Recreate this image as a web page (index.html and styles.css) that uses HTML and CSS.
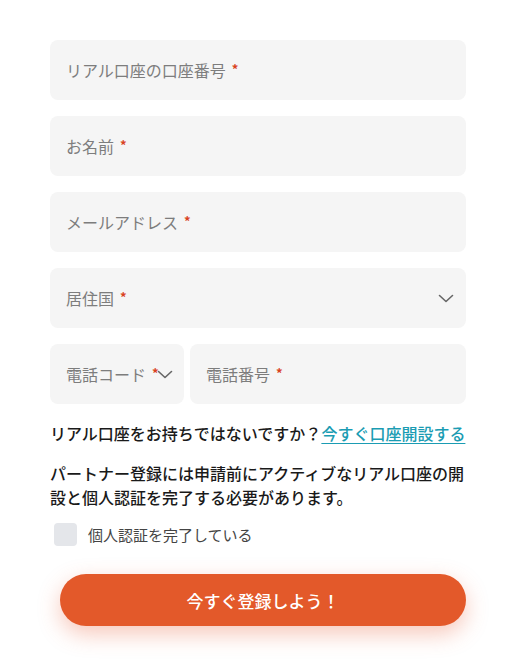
FILE: index.html
```html
<!DOCTYPE html>
<html lang="ja">
<head>
<meta charset="utf-8">
<link rel="stylesheet" href="styles.css">
</head>
<body>
<form class="form">
  <div class="field"><span class="ph">リアル口座の口座番号<span class="req">*</span></span></div>
  <div class="field"><span class="ph">お名前<span class="req">*</span></span></div>
  <div class="field"><span class="ph">メールアドレス<span class="req">*</span></span></div>
  <div class="field select"><span class="ph">居住国<span class="req">*</span></span>
    <svg class="chev" width="16" height="9" viewBox="0 0 16 9"><path d="M1.5 1.5 L8 7.5 L14.5 1.5" fill="none" stroke="#666" stroke-width="1.6" stroke-linecap="round" stroke-linejoin="round"/></svg>
  </div>
  <div class="phone-row">
    <div class="field code"><span class="ph">電話コード<span class="req">*</span></span>
      <svg class="chev small" width="16" height="9" viewBox="0 0 16 9"><path d="M1.5 1.5 L8 7.5 L14.5 1.5" fill="none" stroke="#666" stroke-width="1.6" stroke-linecap="round" stroke-linejoin="round"/></svg>
    </div>
    <div class="field"><span class="ph">電話番号<span class="req">*</span></span></div>
  </div>
  <p class="account">リアル口座をお持ちではないですか？<a class="link" href="#">今すぐ口座開設する</a></p>
  <p class="notice">パートナー登録には申請前にアクティブなリアル口座の開設と個人認証を完了する必要があります。</p>
  <label class="check"><span class="box"></span><span class="check-label">個人認証を完了している</span></label>
  <button type="button" class="submit">今すぐ登録しよう！</button>
</form>
</body>
</html>
```
FILE: styles.css
```css
html, body {
  margin: 0;
  padding: 0;
  background: #ffffff;
}
body {
  font-family: "Noto Sans CJK JP", "Noto Sans", sans-serif;
  min-height: 659px;
}
.form {
  width: 416px;
  margin-left: 50px;
  padding-top: 40px;
  padding-bottom: 40px;
  display: flex;
  flex-direction: column;
}
.field {
  height: 60px;
  background: #f5f5f5;
  border-radius: 8px;
  padding: 0 16px;
  display: flex;
  align-items: center;
  justify-content: space-between;
  margin-bottom: 16px;
  box-sizing: border-box;
}
.ph {
  font-size: 16px;
  color: #7d7d7d;
  line-height: 1;
  position: relative;
}
.req {
  color: #d9431e;
  font-size: 13px;
  font-weight: 700;
  margin-left: 6px;
  position: relative;
  top: -3px;
}
.select {
  padding-right: 12px;
}
.code {
  padding-right: 10px;
  justify-content: flex-start;
}
.chev.small {
  margin-left: -2px;
}
.phone-row {
  display: grid;
  grid-template-columns: 134px 1fr;
  gap: 6px;
}
.phone-row .field {
  margin-bottom: 0;
}
.account {
  margin: 17px 0 0;
  font-size: 16px;
  line-height: 24px;
  font-weight: 500;
  color: #1a1a1a;
  white-space: nowrap;
}
.link {
  color: #1b9cb3;
  text-decoration: underline;
  text-underline-offset: 3px;
}
.notice {
  margin: 16px 0 0;
  font-size: 16px;
  line-height: 24px;
  font-weight: 500;
  color: #1a1a1a;
}
.check {
  display: flex;
  align-items: center;
  margin: 14px 0 0 4px;
}
.box {
  width: 23px;
  height: 23px;
  border-radius: 4px;
  background: #e4e6ea;
  flex: none;
}
.check-label {
  margin-left: 11px;
  font-size: 15px;
  color: #444;
}
.submit {
  margin: 28px 0 0 10px;
  width: 406px;
  height: 52px;
  border: none;
  border-radius: 26px;
  background: #e3592a;
  color: #ffffff;
  font-family: "Noto Sans CJK JP", "Noto Sans", sans-serif;
  font-size: 17px;
  font-weight: 500;
  box-shadow: 0 8px 22px rgba(232, 96, 60, 0.35);
}
```
